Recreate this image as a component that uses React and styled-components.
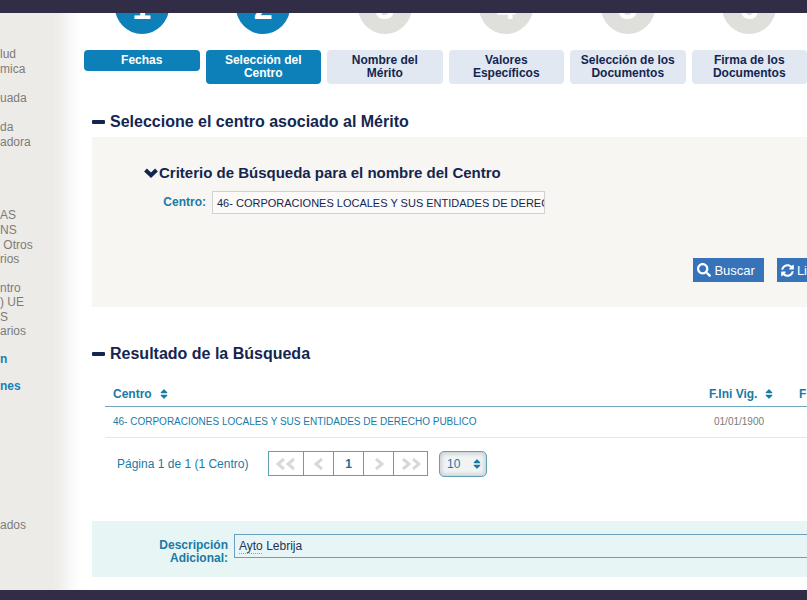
import React from 'react';
import styled, { createGlobalStyle } from 'styled-components';
import { FaSearch, FaSyncAlt, FaSort } from 'react-icons/fa';

const GlobalStyle = createGlobalStyle`
  * {
    box-sizing: border-box;
  }

  body {
    margin: 0;
    background: #ffffff;
    color: #14264f;
    font-family: "Liberation Sans", Arial, sans-serif;
    font-size: 12px;
  }

  button, input, select {
    font-family: inherit;
    margin: 0;
  }
`;

const Page = styled.div`
  display: flex;
  flex-direction: column;
  min-height: 100vh;
  overflow: hidden;
`;

const TopBar = styled.header`
  height: 13px;
  background: #322d47;
`;

const BottomBar = styled.footer`
  height: 10px;
  background: #322d47;
`;

const Body = styled.div`
  display: flex;
  flex: 1;
`;

const Sidebar = styled.nav`
  flex: 0 0 84px;
  padding-top: 34px;
  overflow: hidden;
  background: linear-gradient(to right, #edebe7 52px, #f0efec 60px, #fafafa 72px, #ffffff 82px);
`;

const MenuGroup = styled.ul`
  display: flex;
  flex-direction: column;
  gap: ${(props) => props.$gap || 1}px;
  list-style: none;
  margin: 0 0 ${(props) => props.$after || 0}px;
  padding: 0;
`;

const MenuLink = styled.a`
  display: block;
  min-height: 14px;
  line-height: 14px;
  font-size: 12px;
  white-space: pre-wrap;
  text-decoration: none;
  font-weight: ${(props) => (props.$active ? 'bold' : 'normal')};
  color: ${(props) => (props.$active ? '#1b7fb8' : '#7d7b78')};
`;

const Content = styled.main`
  flex: 1;
  min-width: 0;
`;

const Steps = styled.ol`
  display: grid;
  grid-template-columns: repeat(6, 1fr);
  gap: 6px;
  list-style: none;
  margin: 0;
  padding: 0;
`;

const Step = styled.li`
  display: flex;
  flex-direction: column;
  align-items: center;
`;

const CircleWindow = styled.div`
  display: flex;
  align-items: flex-end;
  height: 21px;
  margin-bottom: 16px;
  overflow: hidden;
`;

const Circle = styled.span`
  flex: none;
  width: 54px;
  height: 54px;
  border-radius: 50%;
  line-height: 54px;
  text-align: center;
  font-size: 34px;
  font-weight: bold;
  color: #ffffff;
  background: ${(props) => (props.$active ? '#0d7fb9' : '#dfdfdc')};
`;

const StepButton = styled.button`
  width: 100%;
  padding: 4px 6px;
  border: 0;
  border-radius: 4px;
  line-height: 13px;
  font-size: 12px;
  font-weight: bold;
  white-space: pre-line;
  color: ${(props) => (props.$active ? '#ffffff' : '#14264f')};
  background: ${(props) => (props.$active ? '#0d7fb9' : '#e1e8f2')};
`;

const Section = styled.section`
  margin-left: 8px;
`;

const Title = styled.h2`
  display: flex;
  align-items: center;
  gap: 5px;
  margin: 0;
  line-height: 20px;
  font-size: 16px;
`;

const Dash = styled.span`
  width: 13px;
  height: 4px;
  border-radius: 1px;
  background: #14264f;
`;

const SearchSection = styled(Section)`
  padding-top: 28px;
`;

const SearchPanel = styled.form`
  margin-top: 5px;
  padding: 27px 0 25px;
  background: #f7f6f2;
`;

const SubTitle = styled.h3`
  display: flex;
  align-items: center;
  gap: 1px;
  margin: 0 0 9px 52px;
  line-height: 18px;
  font-size: 15px;
`;

const Field = styled.div`
  display: flex;
  align-items: center;
`;

const Label = styled.label`
  width: ${(props) => props.$width}px;
  margin-right: 6px;
  line-height: 13px;
  text-align: right;
  font-size: 12px;
  font-weight: bold;
  white-space: pre-line;
  color: #1a7aa5;
`;

const CentroInput = styled.input`
  width: 333px;
  height: 23px;
  padding: 0 0 0 4px;
  border: 1px solid #cfd1d3;
  font-size: 11px;
  color: #14264f;
  background: #fbfaf8;
`;

const Actions = styled.div`
  display: flex;
  justify-content: flex-end;
  gap: 13px;
  margin-top: 44px;
`;

const ActionButton = styled.button`
  display: flex;
  align-items: center;
  gap: 3px;
  height: 24px;
  padding: 0 ${(props) => props.$end}px 0 4px;
  border: 0;
  font-size: 13px;
  color: #ffffff;
  background: #3773b8;
`;

const ResultSection = styled(Section)`
  padding-top: 37px;
`;

const Table = styled.table`
  width: calc(100% - 13px);
  margin: 18px 0 0 13px;
  border-collapse: collapse;
`;

const Th = styled.th`
  width: ${(props) => (props.$width ? `${props.$width}px` : 'auto')};
  height: 24px;
  padding: 0 0 0 ${(props) => props.$start || 0}px;
  border-bottom: 1px solid #6ea8bf;
  text-align: left;
  white-space: nowrap;
  font-size: 12px;
  color: #1a7aa5;

  svg {
    margin-left: 6px;
    vertical-align: -2px;
  }
`;

const Td = styled.td`
  height: 31px;
  padding: 0 0 0 ${(props) => props.$start || 0}px;
  border-bottom: 1px solid #e6e6e6;
  white-space: nowrap;
  font-size: 10px;
  color: #7a7a7a;
`;

const RowLink = styled.a`
  color: #1a7aa5;
  text-decoration: none;
`;

const Pager = styled.div`
  display: flex;
  align-items: center;
  margin: 13px 0 0 25px;
  font-size: 12px;
  color: #1a7aa5;
`;

const PageInfo = styled.span`
  width: 151px;
`;

const PageButtons = styled.div`
  display: flex;
  margin-right: 11px;
  border: 1px solid #5f9fb8;
`;

const PageButton = styled.button`
  display: flex;
  align-items: center;
  justify-content: center;
  width: ${(props) => (props.$wide ? 34 : 30)}px;
  height: 23px;
  padding: 0;
  border: 0;
  font-size: 12px;
  font-weight: bold;
  color: #1a6f97;
  background: #ffffff;

  & + & {
    border-left: 1px solid #5f9fb8;
  }
`;

const SelectBox = styled.div`
  display: grid;
  align-items: center;
  width: 48px;

  > * {
    grid-area: 1 / 1;
  }

  svg {
    justify-self: end;
    margin-right: 4px;
    pointer-events: none;
  }
`;

const PageSize = styled.select`
  appearance: none;
  width: 100%;
  height: 26px;
  padding: 0 0 0 7px;
  border: 1px solid #5f9fb8;
  border-radius: 5px;
  font-size: 12px;
  color: #1a7aa5;
  background: #f1f3f4;
  box-shadow: inset 0 0 5px 1px #bfc6cb;
`;

const DescriptionPanel = styled(Section)`
  display: flex;
  align-items: flex-start;
  margin-top: 44px;
  padding: 13px 0 12px;
  background: #e8f5f5;

  label {
    margin-top: 5px;
  }
`;

const DescriptionBox = styled.div`
  display: grid;
  flex: 1;
  min-width: 0;

  > * {
    grid-area: 1 / 1;
  }
`;

const DescriptionInput = styled.input`
  width: 100%;
  height: 24px;
  padding: 0 4px;
  border: 1px solid #6c9fba;
  border-right: 0;
  font-size: 12px;
  color: #23344f;
  background: #e8f5f7;
`;

const SpellMark = styled.span`
  align-self: end;
  width: 23px;
  margin: 0 0 4px 5px;
  border-bottom: 1px dotted #dd7f8c;
  pointer-events: none;
`;

const menu = [
  { after: 59, items: ['lud', 'mica', '\nuada', '\nda', 'adora'] },
  { after: 14, items: ['AS', 'NS', ' Otros\nrios', '\nntro\n) UE', 'S\narios'] },
  { after: 125, gap: 13, active: true, items: ['n', 'nes'] },
  { items: ['ados'] },
];

const steps = [
  'Fechas',
  'Selección del\nCentro',
  'Nombre del\nMérito',
  'Valores\nEspecíficos',
  'Selección de los\nDocumentos',
  'Firma de los\nDocumentos',
];

const ChevronDown = () => (
  <svg width="14" height="12" viewBox="0 0 14 12" fill="none" stroke="currentColor" strokeWidth="4">
    <path d="M1.5 3L7 8.2L12.5 3" />
  </svg>
);

// chevrons of the pager, count = 1 or 2, turned over for "previous"
const Chevrons = ({ count, back }) => {
  const width = count === 2 ? 20 : 10;
  return (
    <svg
      width={width}
      height="14"
      viewBox={`0 0 ${width} 14`}
      fill="none"
      stroke="#dad8d6"
      strokeWidth="3"
      transform={back ? 'scale(-1 1)' : undefined}
    >
      <path d="M2 2L8 7L2 12" />
      {count === 2 && <path d="M12 2L18 7L12 12" />}
    </svg>
  );
};

class App extends React.Component {
  state = {
    centro: '46- CORPORACIONES LOCALES Y SUS ENTIDADES DE DERECHO PUBLICO',
    descripcion: 'Ayto Lebrija',
    porPagina: '10',
  };

  onChangeCentro = (event) => {
    this.setState({ centro: event.target.value });
  };
  onChangeDescripcion = (event) => {
    this.setState({ descripcion: event.target.value });
  };
  onChangePorPagina = (event) => {
    this.setState({ porPagina: event.target.value });
  };

  render() {
    return (
      <Page>
        <GlobalStyle />
        <TopBar />
        <Body>
          <Sidebar>
            {menu.map((group, index) => (
              <MenuGroup key={index} $after={group.after} $gap={group.gap}>
                {group.items.map((item) => (
                  <li key={item}>
                    <MenuLink href="#" $active={group.active}>{item}</MenuLink>
                  </li>
                ))}
              </MenuGroup>
            ))}
          </Sidebar>
          <Content>
            <Steps>
              {steps.map((step, index) => (
                <Step key={step}>
                  <CircleWindow>
                    <Circle $active={index < 2}>{index + 1}</Circle>
                  </CircleWindow>
                  <StepButton $active={index < 2}>{step}</StepButton>
                </Step>
              ))}
            </Steps>

            <SearchSection>
              <Title><Dash />Seleccione el centro asociado al Mérito</Title>
              <SearchPanel onSubmit={(event) => event.preventDefault()}>
                <SubTitle><ChevronDown />Criterio de Búsqueda para el nombre del Centro</SubTitle>
                <Field>
                  <Label htmlFor="centro" $width={114}>Centro:</Label>
                  <CentroInput id="centro" value={this.state.centro} onChange={this.onChangeCentro} />
                </Field>
                <Actions>
                  <ActionButton type="submit" $end={9}><FaSearch size={14} />Buscar</ActionButton>
                  <ActionButton type="reset" $end={0}><FaSyncAlt size={13} />Li</ActionButton>
                </Actions>
              </SearchPanel>
            </SearchSection>

            <ResultSection>
              <Title><Dash />Resultado de la Búsqueda</Title>
              <Table>
                <thead>
                  <tr>
                    <Th $start={8}>Centro<FaSort size={12} /></Th>
                    <Th $width={90}>F.Ini Vig.<FaSort size={12} /></Th>
                    <Th $width={8}>F</Th>
                  </tr>
                </thead>
                <tbody>
                  <tr>
                    <Td $start={8}>
                      <RowLink href="#">46- CORPORACIONES LOCALES Y SUS ENTIDADES DE DERECHO PUBLICO</RowLink>
                    </Td>
                    <Td $start={5}>01/01/1900</Td>
                    <Td />
                  </tr>
                </tbody>
              </Table>
              <Pager>
                <PageInfo>Página 1 de 1 (1 Centro)</PageInfo>
                <PageButtons>
                  <PageButton $wide aria-label="Primera"><Chevrons count={2} back /></PageButton>
                  <PageButton aria-label="Anterior"><Chevrons count={1} back /></PageButton>
                  <PageButton>1</PageButton>
                  <PageButton aria-label="Siguiente"><Chevrons count={1} /></PageButton>
                  <PageButton $wide aria-label="Última"><Chevrons count={2} /></PageButton>
                </PageButtons>
                <SelectBox>
                  <PageSize aria-label="Centros por página" value={this.state.porPagina} onChange={this.onChangePorPagina}>
                    <option>10</option>
                  </PageSize>
                  <FaSort size={12} />
                </SelectBox>
              </Pager>
            </ResultSection>

            <DescriptionPanel>
              <Label htmlFor="descripcion" $width={136}>{'Descripción\nAdicional:'}</Label>
              <DescriptionBox>
                <DescriptionInput id="descripcion" value={this.state.descripcion} onChange={this.onChangeDescripcion} />
                <SpellMark />
              </DescriptionBox>
            </DescriptionPanel>
          </Content>
        </Body>
        <BottomBar />
      </Page>
    );
  }
}

export default App;
